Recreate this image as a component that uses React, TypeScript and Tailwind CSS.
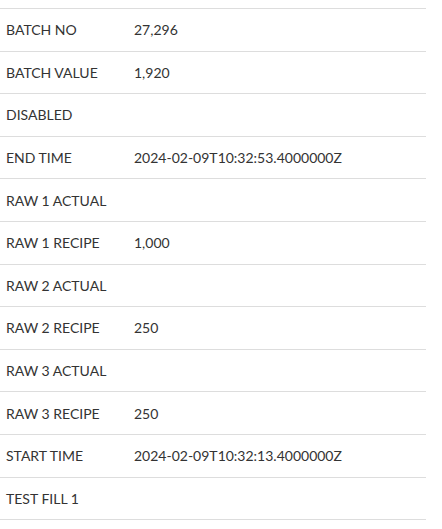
import React from 'react';

const rows: [string, string][] = [
  ['BATCH NO', '27,296'],
  ['BATCH VALUE', '1,920'],
  ['DISABLED', ''],
  ['END TIME', '2024-02-09T10:32:53.4000000Z'],
  ['RAW 1 ACTUAL', ''],
  ['RAW 1 RECIPE', '1,000'],
  ['RAW 2 ACTUAL', ''],
  ['RAW 2 RECIPE', '250'],
  ['RAW 3 ACTUAL', ''],
  ['RAW 3 RECIPE', '250'],
  ['START TIME', '2024-02-09T10:32:13.4000000Z'],
  ['TEST FILL 1', ''],
];

export default function App() {
  return (
    <div className="bg-white w-[442px] h-[529px] pt-2 pr-4" style={{ fontFamily: 'Lato, sans-serif' }}>
      <div className="border-t border-[#dddddd]">
        {rows.map(([label, value]) => (
          <div key={label} className="flex items-center h-[42.6px] border-b border-[#dddddd] text-[14px] text-[#333333]">
            <div className="w-[134px] pl-[6px]">{label}</div>
            <div>{value}</div>
          </div>
        ))}
      </div>
    </div>
  );
}
